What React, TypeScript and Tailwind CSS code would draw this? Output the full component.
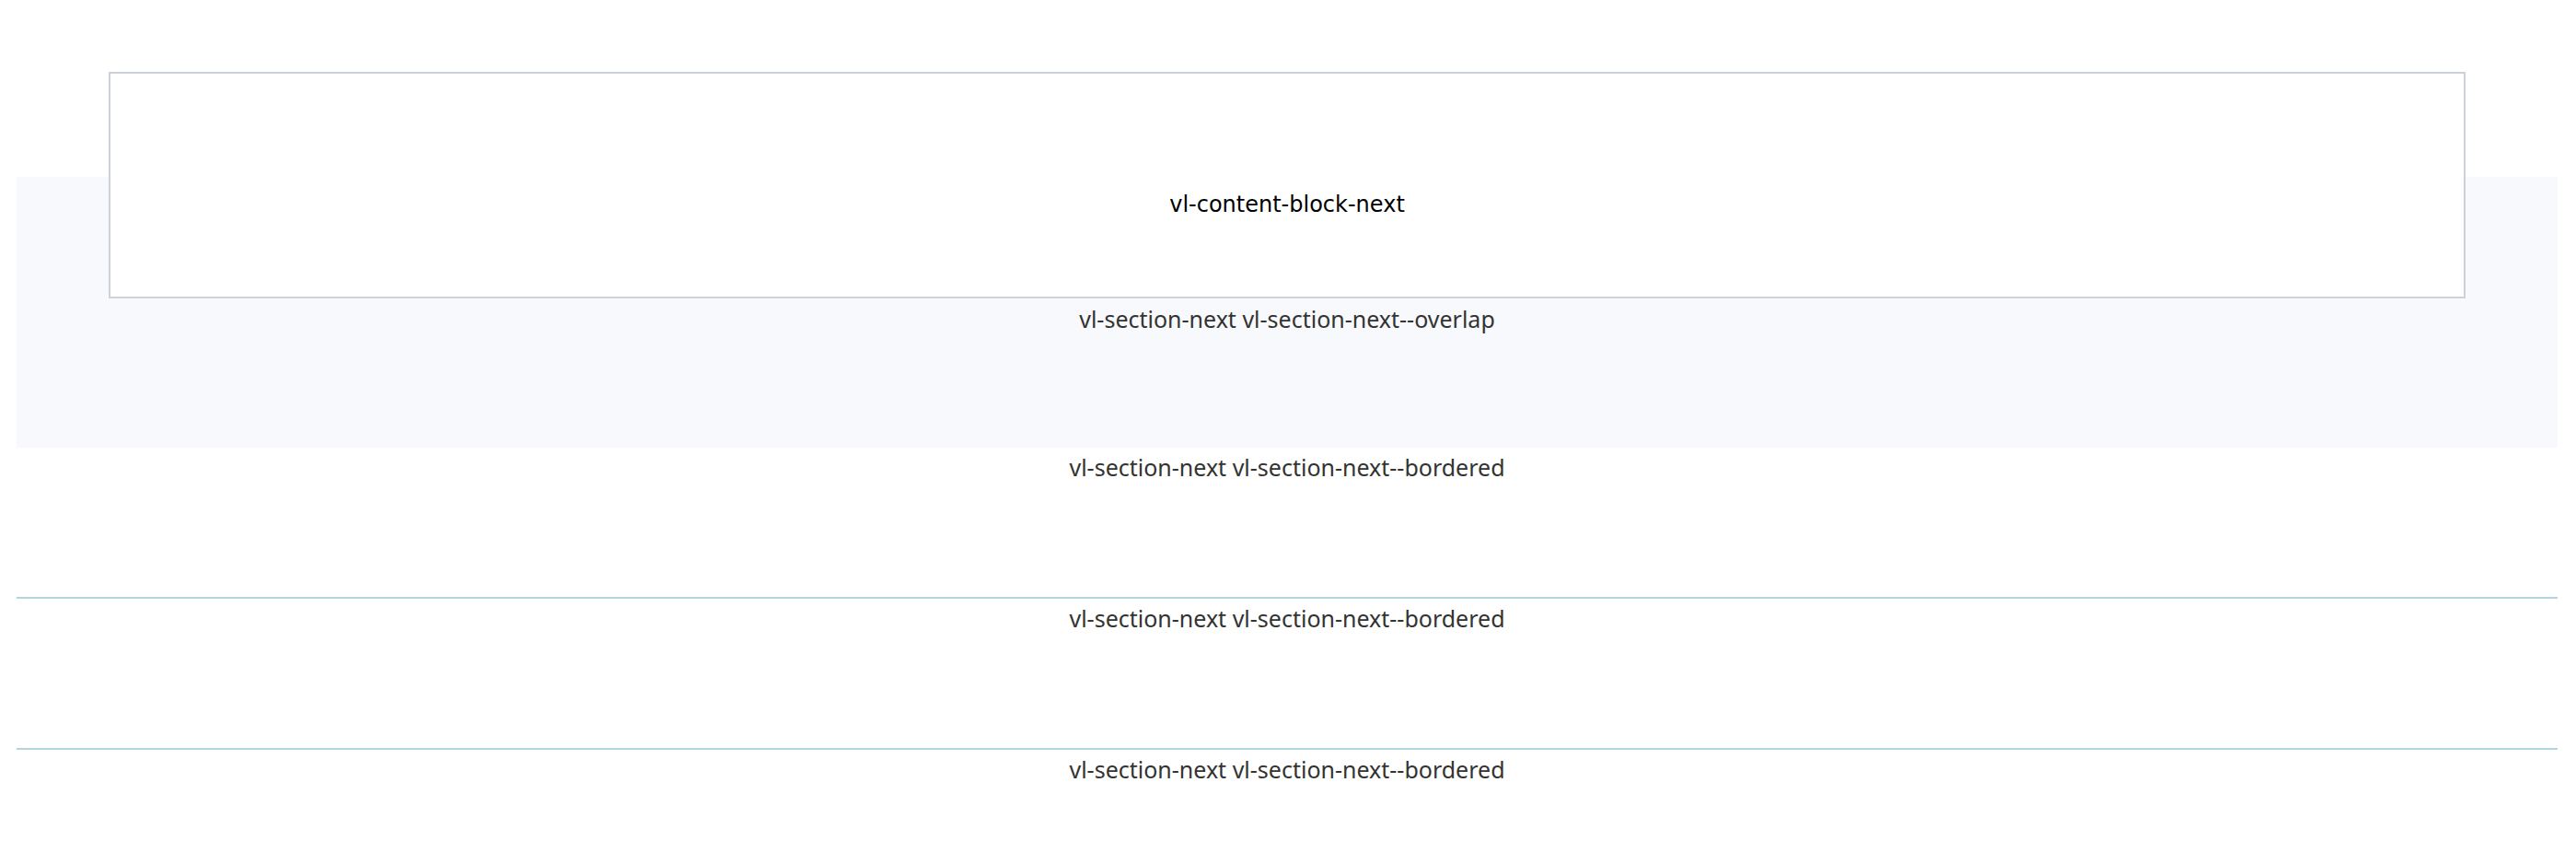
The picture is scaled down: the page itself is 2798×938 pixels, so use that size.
const borderedSections = [1, 2, 3]

function ContentBlock() {
  return (
    <div className="relative z-10 mx-[100px] box-border h-[246px] border-2 border-[#cbd2da] bg-white pt-[126px] text-center font-['DejaVu_Sans',sans-serif] text-[24px] leading-[32px] text-black">
      vl-content-block-next
    </div>
  )
}

export default function App() {
  return (
    <div className="min-h-screen bg-white pl-[18px] pr-[20px] pt-[78px] font-['Noto_Sans',sans-serif] text-[25px] leading-[36px] text-[#333332]">
      <ContentBlock />

      <section className="-mt-[132px] box-border h-[294px] bg-[#f7f9fc] pt-[136px] text-center">
        vl-section-next vl-section-next--overlap
      </section>

      {borderedSections.map((i) => (
        <section
          key={i}
          className="box-border h-[164px] border-b-2 border-[#b3d5e0] pt-[3px] text-center last:border-b-0"
        >
          vl-section-next vl-section-next--bordered
        </section>
      ))}
    </div>
  )
}
